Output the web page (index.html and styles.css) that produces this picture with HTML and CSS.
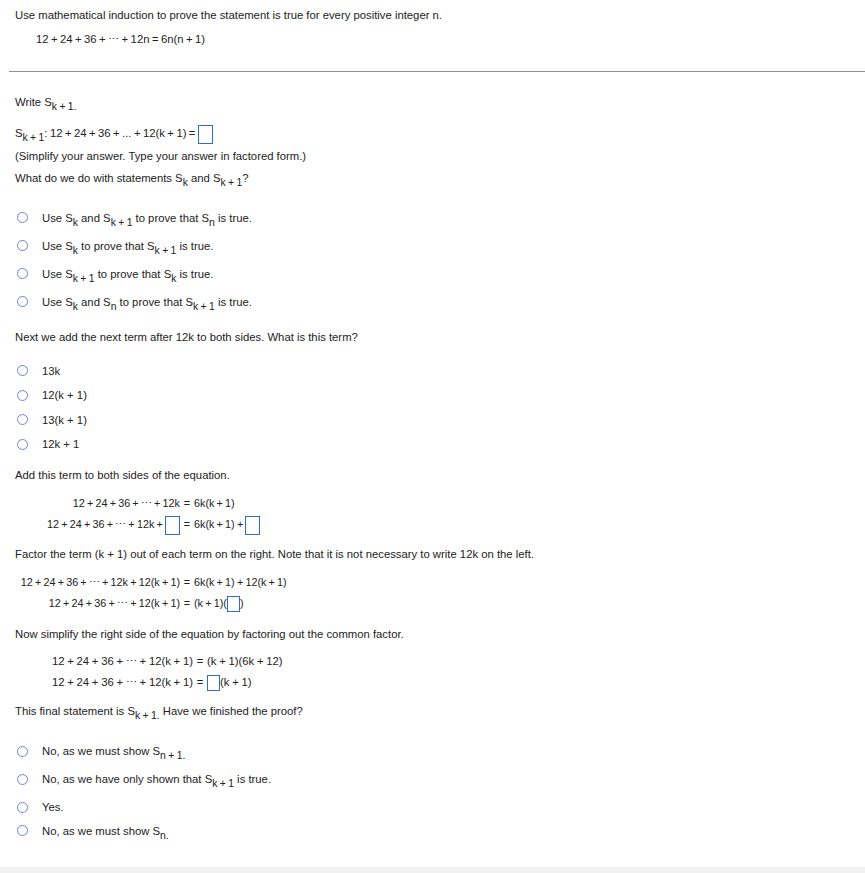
FILE: index.html
```html
<!DOCTYPE html>
<html lang="en">
<head>
<meta charset="utf-8">
<title>Mathematical induction</title>
<link rel="stylesheet" href="styles.css">
</head>
<body>
<div class="page">
  <header class="prompt">
    <p class="line">Use mathematical induction to prove the statement is true for every positive integer n.</p>
    <p class="line math stmt">12 + 24 + 36 + ⋯ + 12n = 6n(n + 1)</p>
  </header>
  <hr class="rule">
  <main class="work">
    <p class="line write">Write S<span class="sub">k + 1.</span></p>
    <p class="line math answer">S<span class="sub">k + 1</span>: 12 + 24 + 36 + ... + 12(k + 1) = <span class="box"></span></p>
    <p class="line hint">(Simplify your answer. Type your answer in factored form.)</p>
    <p class="line q1">What do we do with statements S<span class="sub">k</span> and S<span class="sub">k + 1</span>?</p>

    <div class="options opts-1">
      <div class="opt tall"><span class="radio"></span><span class="label">Use S<span class="sub">k</span> and S<span class="sub">k + 1</span> to prove that S<span class="sub">n</span> is true.</span></div>
      <div class="opt tall"><span class="radio"></span><span class="label">Use S<span class="sub">k</span> to prove that S<span class="sub">k + 1</span> is true.</span></div>
      <div class="opt tall"><span class="radio"></span><span class="label">Use S<span class="sub">k + 1</span> to prove that S<span class="sub">k</span> is true.</span></div>
      <div class="opt tall"><span class="radio"></span><span class="label">Use S<span class="sub">k</span> and S<span class="sub">n</span> to prove that S<span class="sub">k + 1</span> is true.</span></div>
    </div>

    <p class="line q2">Next we add the next term after 12k to both sides. What is this term?</p>

    <div class="options opts-2">
      <div class="opt"><span class="radio"></span><span class="label">13k</span></div>
      <div class="opt"><span class="radio"></span><span class="label">12(k + 1)</span></div>
      <div class="opt"><span class="radio"></span><span class="label">13(k + 1)</span></div>
      <div class="opt"><span class="radio"></span><span class="label">12k + 1</span></div>
    </div>

    <p class="line q3">Add this term to both sides of the equation.</p>

    <div class="eqs eqs-a">
      <div class="lhs">12 + 24 + 36 + ⋯ + 12k</div><div class="eq">=</div><div class="rhs">6k(k + 1)</div>
      <div class="lhs">12 + 24 + 36 + ⋯ + 12k + <span class="box"></span></div><div class="eq">=</div><div class="rhs">6k(k + 1) + <span class="box"></span></div>
    </div>

    <p class="line q4">Factor the term (k + 1) out of each term on the right. Note that it is not necessary to write 12k on the left.</p>

    <div class="eqs eqs-b">
      <div class="lhs">12 + 24 + 36 + ⋯ + 12k + 12(k + 1)</div><div class="eq">=</div><div class="rhs">6k(k + 1) + 12(k + 1)</div>
      <div class="lhs">12 + 24 + 36 + ⋯ + 12(k + 1)</div><div class="eq">=</div><div class="rhs">(k + 1)(<span class="box sm"></span>)</div>
    </div>

    <p class="line q5">Now simplify the right side of the equation by factoring out the common factor.</p>

    <div class="eqs eqs-c">
      <div class="lhs">12 + 24 + 36 + ⋯ + 12(k + 1)</div><div class="eq">=</div><div class="rhs">(k + 1)(6k + 12)</div>
      <div class="lhs">12 + 24 + 36 + ⋯ + 12(k + 1)</div><div class="eq">=</div><div class="rhs"><span class="box sm"></span>(k + 1)</div>
    </div>

    <p class="line q6">This final statement is S<span class="sub">k + 1.</span> Have we finished the proof?</p>

    <div class="options opts-3">
      <div class="opt tall"><span class="radio"></span><span class="label">No, as we must show S<span class="sub">n + 1.</span></span></div>
      <div class="opt tall"><span class="radio"></span><span class="label">No, as we have only shown that S<span class="sub">k + 1</span> is true.</span></div>
      <div class="opt short"><span class="radio"></span><span class="label">Yes.</span></div>
      <div class="opt"><span class="radio"></span><span class="label">No, as we must show S<span class="sub">n.</span></span></div>
    </div>
  </main>
  <footer class="footer"></footer>
</div>
</body>
</html>
```

FILE: styles.css
```css
html, body {
  margin: 0;
  padding: 0;
  background: #ffffff;
}

body {
  font-family: "Liberation Sans", Arial, sans-serif;
  font-size: 11.3px;
  color: #222222;
  overflow: hidden;
}

.page {
  width: 865px;
}

p {
  margin: 0;
}

.line {
  line-height: 14px;
  white-space: nowrap;
}

.prompt {
  padding: 8px 0 0 15px;
}

.stmt {
  margin: 10px 0 0 21px;
}

.math {
  word-spacing: -0.7px;
}

.rule {
  margin: 25px 0 0 9px;
  border: 0;
  border-top: 1px solid #8e949c;
  height: 0;
}

.work {
  padding-left: 15px;
}

.sub {
  font-size: 0.92em;
  vertical-align: -4px;
  line-height: 0;
  word-spacing: -0.5px;
}

.box {
  display: inline-block;
  box-sizing: border-box;
  width: 15px;
  height: 19px;
  border: 1.5px solid #2f6bd0;
  vertical-align: middle;
  word-spacing: 0;
}

.box.sm {
  width: 13px;
  height: 16px;
}

.write { margin-top: 23px; }
.answer { margin-top: 14px; line-height: 20px; }
.hint { margin-top: 5px; }
.q1 { margin-top: 8px; }
.q2 { margin-top: 21px; }
.q3 { margin-top: 17px; }
.q4 { margin-top: 12.5px; }
.q5 { margin-top: 13.5px; }
.q6 { margin-top: 11.5px; }

.options {
  display: flex;
  flex-direction: column;
}

.opts-1 { margin-top: 26px; }
.opts-2 { margin-top: 20px; }
.opts-3 { margin-top: 25.7px; }

.opt {
  display: flex;
  align-items: center;
  height: 14px;
  line-height: 14px;
  margin-bottom: 10.67px;
  white-space: nowrap;
}

.opt.tall { margin-bottom: 14px; }
.opt.short { margin-bottom: 9.5px; }
.opt:last-child { margin-bottom: 0; }

.radio {
  flex: none;
  box-sizing: border-box;
  width: 11px;
  height: 11px;
  margin: 0 14.5px 0 1.5px;
  border: 1.5px solid #6f84d4;
  border-radius: 50%;
  background: #ffffff;
}

.eqs {
  display: grid;
  grid-auto-rows: 21px;
  align-items: center;
  white-space: nowrap;
  line-height: 21px;
}

.eqs-a,
.eqs-b {
  grid-template-columns: 165px 14px auto;
  margin-top: 10.5px;
  font-size: 10.8px;
  word-spacing: -0.8px;
}

.eqs-c {
  grid-template-columns: 178px 14px auto;
  margin-top: 9.5px;
  word-spacing: -0.4px;
}

.lhs { text-align: right; }
.eq { text-align: center; }
.rhs { text-align: left; }

.footer {
  margin-top: 29.8px;
  height: 6px;
  background: #f1f1f1;
}
```
